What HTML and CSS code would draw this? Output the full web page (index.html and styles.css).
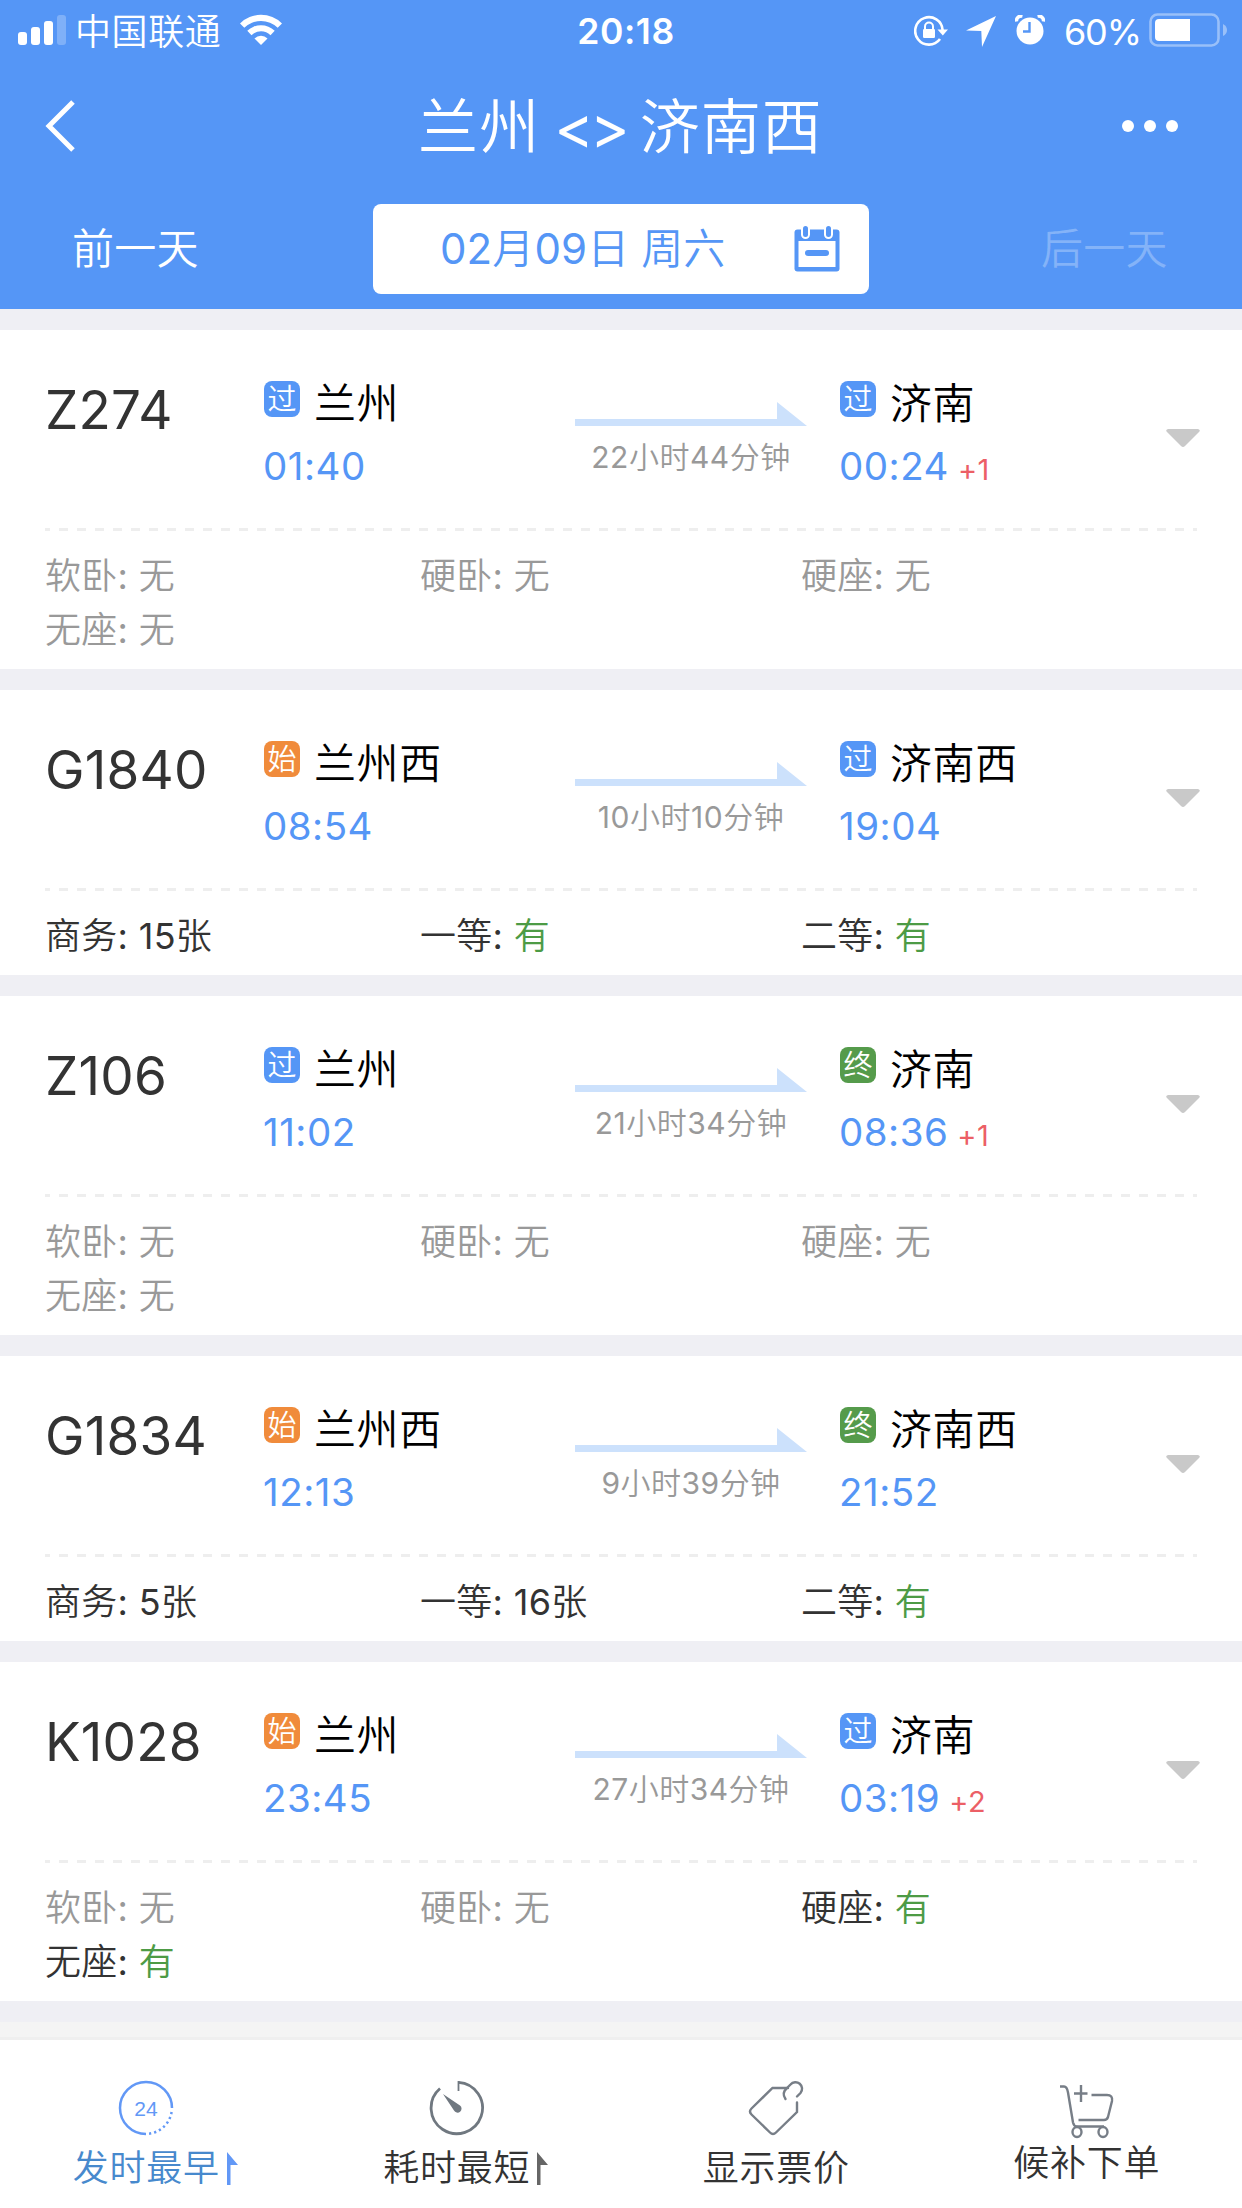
FILE: index.html
```
<!DOCTYPE html>
<html lang="zh-CN"><head><meta charset="utf-8"><title>兰州 - 济南西</title><link rel="stylesheet" href="styles.css"></head>
<body>
<header class="header">
  <div class="status">
    <div class="status-left">
      <svg class="signal" width="48" height="30" viewBox="0 0 48 30" fill="#fff"><rect y="17" width="9" height="13" rx="3"/><rect x="13" y="12" width="9" height="18" rx="3"/><rect x="26" y="6" width="9" height="24" rx="3"/><rect x="39" width="9" height="30" rx="3" opacity=".25"/></svg>
      <span class="carrier">中国联通</span>
      <svg class="wifi" width="42" height="31" viewBox="0 0 42 31" fill="#fff"><path d="M21 31l-6.5-6.6a9.3 9.3 0 0 1 13 0z"/><path d="M11.5 21.2l-4.2-4.4a19.5 19.5 0 0 1 27.4 0l-4.2 4.4a13.5 13.5 0 0 0-19 0z"/><path d="M4.3 13.8L0 9.4a30 30 0 0 1 42 0l-4.3 4.4a24 24 0 0 0-33.4 0z"/></svg>
    </div>
    <span class="clock">20:18</span>
    <div class="status-right">
      <svg class="lock" width="34" height="32" viewBox="0 0 34 32"><path d="M28.6 15A13.7 13.7 0 1 0 26 24" fill="none" stroke="#fff" stroke-width="2.6"/><path d="M23.5 14.5h10.5l-5.2 6z" fill="#fff"/><rect x="9" y="14" width="12" height="9" rx="1.2" fill="#fff"/><path d="M11 15v-3.500a4 4 0 0 1 8 0v3.500" fill="none" stroke="#fff" stroke-width="2"/></svg>
      <svg class="loc" width="30" height="31" viewBox="0 0 30 31" fill="#fff"><path d="M30 0L16 31l-.7-16L0 14.500z"/></svg>
      <svg class="alarm" width="30" height="30" viewBox="0 0 30 30"><ellipse cx="15" cy="16" rx="13.500" ry="13.500" fill="#fff"/><path d="M1.500 6.500a5 5 0 0 1 6-5.500M28.500 6.500a5 5 0 0 0-6-5.500" stroke="#fff" stroke-width="3.500" fill="none"/><path d="M14.500 7v9.500h-6.500" stroke="#5596f6" stroke-width="2.400" fill="none"/></svg>
      <span class="percent">60%</span>
      <svg class="battery" width="79" height="34" viewBox="0 0 79 34"><rect x="1.500" y="1.500" width="68" height="31" rx="7" fill="none" stroke="#fff" stroke-opacity=".4" stroke-width="2.600"/><path d="M10 6h31v22H10a4 4 0 0 1-4-4V10a4 4 0 0 1 4-4z" fill="#fff"/><path d="M74 11q4 2 4 6t-4 6z" fill="#fff" fill-opacity=".4"/></svg>
    </div>
  </div>
  <div class="nav">
    <svg class="back" width="34" height="56" viewBox="0 0 34 56"><path d="M31 4L7 28l24 24" fill="none" stroke="#fff" stroke-width="5"/></svg>
    <h1 class="title">兰州 <span class="swap">&lt;&gt;</span> 济南西</h1>
    <svg class="more" width="60" height="14" viewBox="0 0 60 14" fill="#fff"><circle cx="8" cy="7" r="6"/><circle cx="30" cy="7" r="6"/><circle cx="52" cy="7" r="6"/></svg>
  </div>
  <div class="days">
    <span class="prev">前一天</span>
    <div class="date"><span class="date-text"><span class="num">02</span>月<span class="num">09</span>日 周六</span>
      <svg class="cal" width="46" height="46" viewBox="0 0 46 46"><rect x=".5" y="3.500" width="45" height="42" rx="3" fill="#5596f6"/><rect x="4.500" y="15" width="37" height="26" fill="#fff"/><rect x="7" y="-3" width="9" height="16" rx="4.500" fill="#fff"/><rect x="30" y="-3" width="9" height="16" rx="4.500" fill="#fff"/><rect x="9" y="0" width="5" height="11" rx="2.500" fill="#5596f6"/><rect x="32" y="0" width="5" height="11" rx="2.500" fill="#5596f6"/><rect x="11" y="24" width="24" height="6" rx="3" fill="#5596f6"/></svg>
    </div>
    <span class="next">后一天</span>
  </div>
</header>
<main class="list" id="list"></main>
<nav class="tabs">
  <div class="tab active">
    <svg class="icon with-mark" width="56" height="56" viewBox="0 0 56 56" fill="none" stroke="#6298f6" stroke-width="2.500"><path d="M54 28A26 26 0 1 0 28 54"/><path d="M53.600 32A26 26 0 0 1 31 53.700" stroke-dasharray="2.200 3"/><text class="icon-text" x="28" y="36" text-anchor="middle">24</text></svg>
    <span class="label">发时最早<svg class="mark" width="11" height="33" viewBox="0 0 11 33"><path d="M0 0l11 13H3.500v20H0z" fill="#6298f6"/></svg></span>
  </div>
  <div class="tab">
    <svg class="icon with-mark" width="56" height="56" viewBox="0 0 56 56"><path d="M11 8.500A25.700 25.700 0 1 0 29.500 2.300" fill="none" stroke="#707880" stroke-width="2.800"/><path d="M29.500 1v10" stroke="#707880" stroke-width="1.800"/><path d="M14 14l17 11.500a4 4 0 1 1-6 5z" fill="#707880"/></svg>
    <span class="label">耗时最短<svg class="mark" width="11" height="33" viewBox="0 0 11 33"><path d="M0 0l11 13H3.500v20H0z" fill="#666"/></svg></span>
  </div>
  <div class="tab">
    <svg class="icon" width="56" height="56" viewBox="0 0 56 56" fill="none" stroke="#777e87" stroke-width="2.400" stroke-linecap="round"><path d="M40 8H24.500L3.500 28.500q-3 3 0 6L22 52.500q3 3 6 0L49 32V22.500"/><path d="M37.500 19q-4-6 1-10.500l4-4a6.500 6.500 0 0 1 10 8.500L49 16.500"/></svg>
    <span class="label">显示票价</span>
  </div>
  <div class="tab cart">
    <svg class="icon" width="56" height="56" viewBox="0 0 56 56" fill="none" stroke="#777e87" stroke-width="2.400"><path d="M1 2.500h4q3 0 4 6l5 30q1 4 4 4h27"/><path d="M22 1v17M15 9.500h13.500M32.500 11H48q6 0 5 6l-4 16q-1 3-4 3H19.500"/><ellipse cx="18" cy="48" rx="4.500" ry="5"/><ellipse cx="44" cy="48" rx="4.500" ry="5"/></svg>
    <span class="label">候补下单</span>
  </div>
</nav>
<script src="app.js"></script>
</body></html>
```
FILE: app.js
```
const trains = [
  { no: 'Z274', from: ['过', '兰州', '01:40'], time: '22小时44分钟', to: ['过', '济南', '00:24', '+1'], seats: [['软卧', '无'], ['硬卧', '无'], ['硬座', '无'], ['无座', '无']] },
  { no: 'G1840', from: ['始', '兰州西', '08:54'], time: '10小时10分钟', to: ['过', '济南西', '19:04'], seats: [['商务', '15张'], ['一等', '有'], ['二等', '有']] },
  { no: 'Z106', from: ['过', '兰州', '11:02'], time: '21小时34分钟', to: ['终', '济南', '08:36', '+1'], seats: [['软卧', '无'], ['硬卧', '无'], ['硬座', '无'], ['无座', '无']] },
  { no: 'G1834', from: ['始', '兰州西', '12:13'], time: '9小时39分钟', to: ['终', '济南西', '21:52'], seats: [['商务', '5张'], ['一等', '16张'], ['二等', '有']] },
  { no: 'K1028', from: ['始', '兰州', '23:45'], time: '27小时34分钟', to: ['过', '济南', '03:19', '+2'], seats: [['软卧', '无'], ['硬卧', '无'], ['硬座', '有'], ['无座', '有']] }
];
const badge = { '过': 'pass', '始': 'start', '终': 'end' };
const digits = text => text.replace(/\d+/g, '<span class="num">$&</span>');
const stop = ([kind, name, time, plus]) => `<div class="stop">
  <div class="station"><span class="badge ${badge[kind]}">${kind}</span><span class="name">${name}</span></div>
  <div class="time">${time}${plus ? `<span class="plus">${plus}</span>` : ''}</div></div>`;
const seat = ([kind, left]) => `<span class="seat ${left === '无' ? 'none' : ''}">${kind}<span class="num">:</span> <span class="${left === '有' ? 'yes' : ''}">${digits(left)}</span></span>`;
document.getElementById('list').innerHTML = trains.map(t => `<section class="card">
  <div class="route"><div class="no">${t.no}</div>${stop(t.from)}
    <div class="duration"><svg class="arrow" width="232" height="24" viewBox="0 0 232 24"><path d="M0 17h202V0l30 24H0z" fill="#cce1fc"/></svg><span class="dur-text">${digits(t.time)}</span></div>
    ${stop(t.to)}
    <svg class="caret" width="34" height="18" viewBox="0 0 34 18"><path d="M2 0h30q3 1 1 3L19 17q-2 2-4 0L1 3Q-1 1 2 0z" fill="#c9c9c9"/></svg></div>
  <svg class="dash" width="1152" height="3"><path d="M0 1.500h1152" stroke="#eee" stroke-width="3" stroke-dasharray="9 9" stroke-dashoffset="4"/></svg>
  <div class="seats">${t.seats.map(seat).join('')}</div>
</section>`).join('');
```
FILE: styles.css
```
* { box-sizing: border-box; margin: 0; padding: 0; }
body { width: 1242px; height: 2208px; display: flex; flex-direction: column; overflow: hidden; background: #f4f4f4; color: #333; font-family: Inter, "Noto Sans CJK SC", sans-serif; font-weight: 350; font-size: 36px; }
svg { display: block; flex: none; }
.num { font-weight: 400; }
.header { height: 309px; background: #5596f6; color: #fff; }
.status { height: 60px; display: grid; grid-template-columns: 1fr auto 1fr; }
.status-left { display: flex; align-items: flex-start; padding-left: 18px; }
.signal { margin-top: 15px; }
.carrier { margin-left: 9px; line-height: 64px; letter-spacing: .6px; }
.wifi { margin: 14px 0 0 19px; }
.clock { font-size: 35.500px; font-weight: 600; line-height: 64px; letter-spacing: .6px; margin-left: 10px; }
.status-right { display: flex; justify-content: flex-end; padding-right: 14px; }
.lock { margin-top: 15px; }
.loc { margin: 16px 0 0 18px; }
.alarm { margin: 15px 0 0 19px; }
.percent { margin-left: 19px; width: 76px; line-height: 64px; font-weight: 400; letter-spacing: -1.200px; white-space: nowrap; }
.battery { margin: 13px 0 0 9px; }
.nav { height: 132px; display: flex; align-items: center; padding: 0 62px 0 42px; }
.title { flex: 1; text-align: center; font-size: 60px; font-weight: 350; line-height: 82px; letter-spacing: 1.100px; word-spacing: -4px; padding: 2px 0 0 45px; }
.swap { font-weight: 400; letter-spacing: -4px; }
.days { display: flex; align-items: center; height: 90px; margin-top: 12px; font-size: 42px; line-height: 50px; letter-spacing: .3px; }
.prev { width: 373px; padding-left: 72px; }
.date { width: 496px; height: 90px; display: flex; align-items: center; padding-left: 67px; background: #fff; color: #5596f6; border-radius: 8px; }
.date-text { width: 354px; white-space: nowrap; letter-spacing: .1px; }
.next { padding-left: 172px; color: rgba(255,255,255,.28); }
.list { background: #efeff4; padding: 21px 0; display: flex; flex-direction: column; gap: 21px; }
.card { background: #fff; padding: 0 45px 13px; }
.route { height: 198px; display: grid; grid-template-columns: 219px 311px 265px 326px 34px; }
.no { padding-top: 50px; font-size: 53px; line-height: 60px; font-weight: 400; letter-spacing: .2px; }
.stop { padding-top: 51px; }
.station { display: flex; align-items: flex-start; height: 42px; }
.badge { width: 36px; height: 36px; border-radius: 8px; color: #fff; font-size: 29px; line-height: 38px; text-align: center; }
.pass { background: #5596f6; }
.start { background: #f08b3b; }
.end { background: #559b4b; }
.name { margin-left: 14px; color: #000; font-size: 42px; line-height: 45px; letter-spacing: .6px; }
.time { margin: 19px 0 0 -1px; font-size: 38.500px; line-height: 48px; color: #5596f6; font-weight: 400; letter-spacing: .5px; }
.plus { margin-left: 9px; font-size: 29px; color: #ec5f66; }
.duration { padding-top: 72px; width: 232px; }
.dur-text { display: block; margin-top: 12px; line-height: 39px; font-size: 30px; color: #999; text-align: center; letter-spacing: .5px; white-space: nowrap; }
.caret { margin-top: 99px; }
.seats { display: grid; grid-template-columns: 375px 381px 1fr; padding: 18px 0 0; margin-bottom: -1px; line-height: 54px; letter-spacing: .3px; }
.none { color: #999; }
.yes { color: #4d9b45; }
.tabs { margin-top: 15px; border-top: 3px solid #efefef; height: 171px; background: #fff; display: grid; grid-template-columns: repeat(4, 1fr); }
.tab { display: flex; flex-direction: column; align-items: center; padding-top: 40px; }
.with-mark { margin-right: 18px; }
.label { display: flex; align-items: center; margin-top: 7px; line-height: 50px; letter-spacing: .7px; }
.mark { margin-left: 7px; }
.active .label { color: #4789cd; }
.icon-text { font: 300 21px "Liberation Sans", sans-serif; fill: #6298f6; stroke: none; }
.cart { padding-top: 44px; }
.cart .label { margin-top: -2px; }
```
